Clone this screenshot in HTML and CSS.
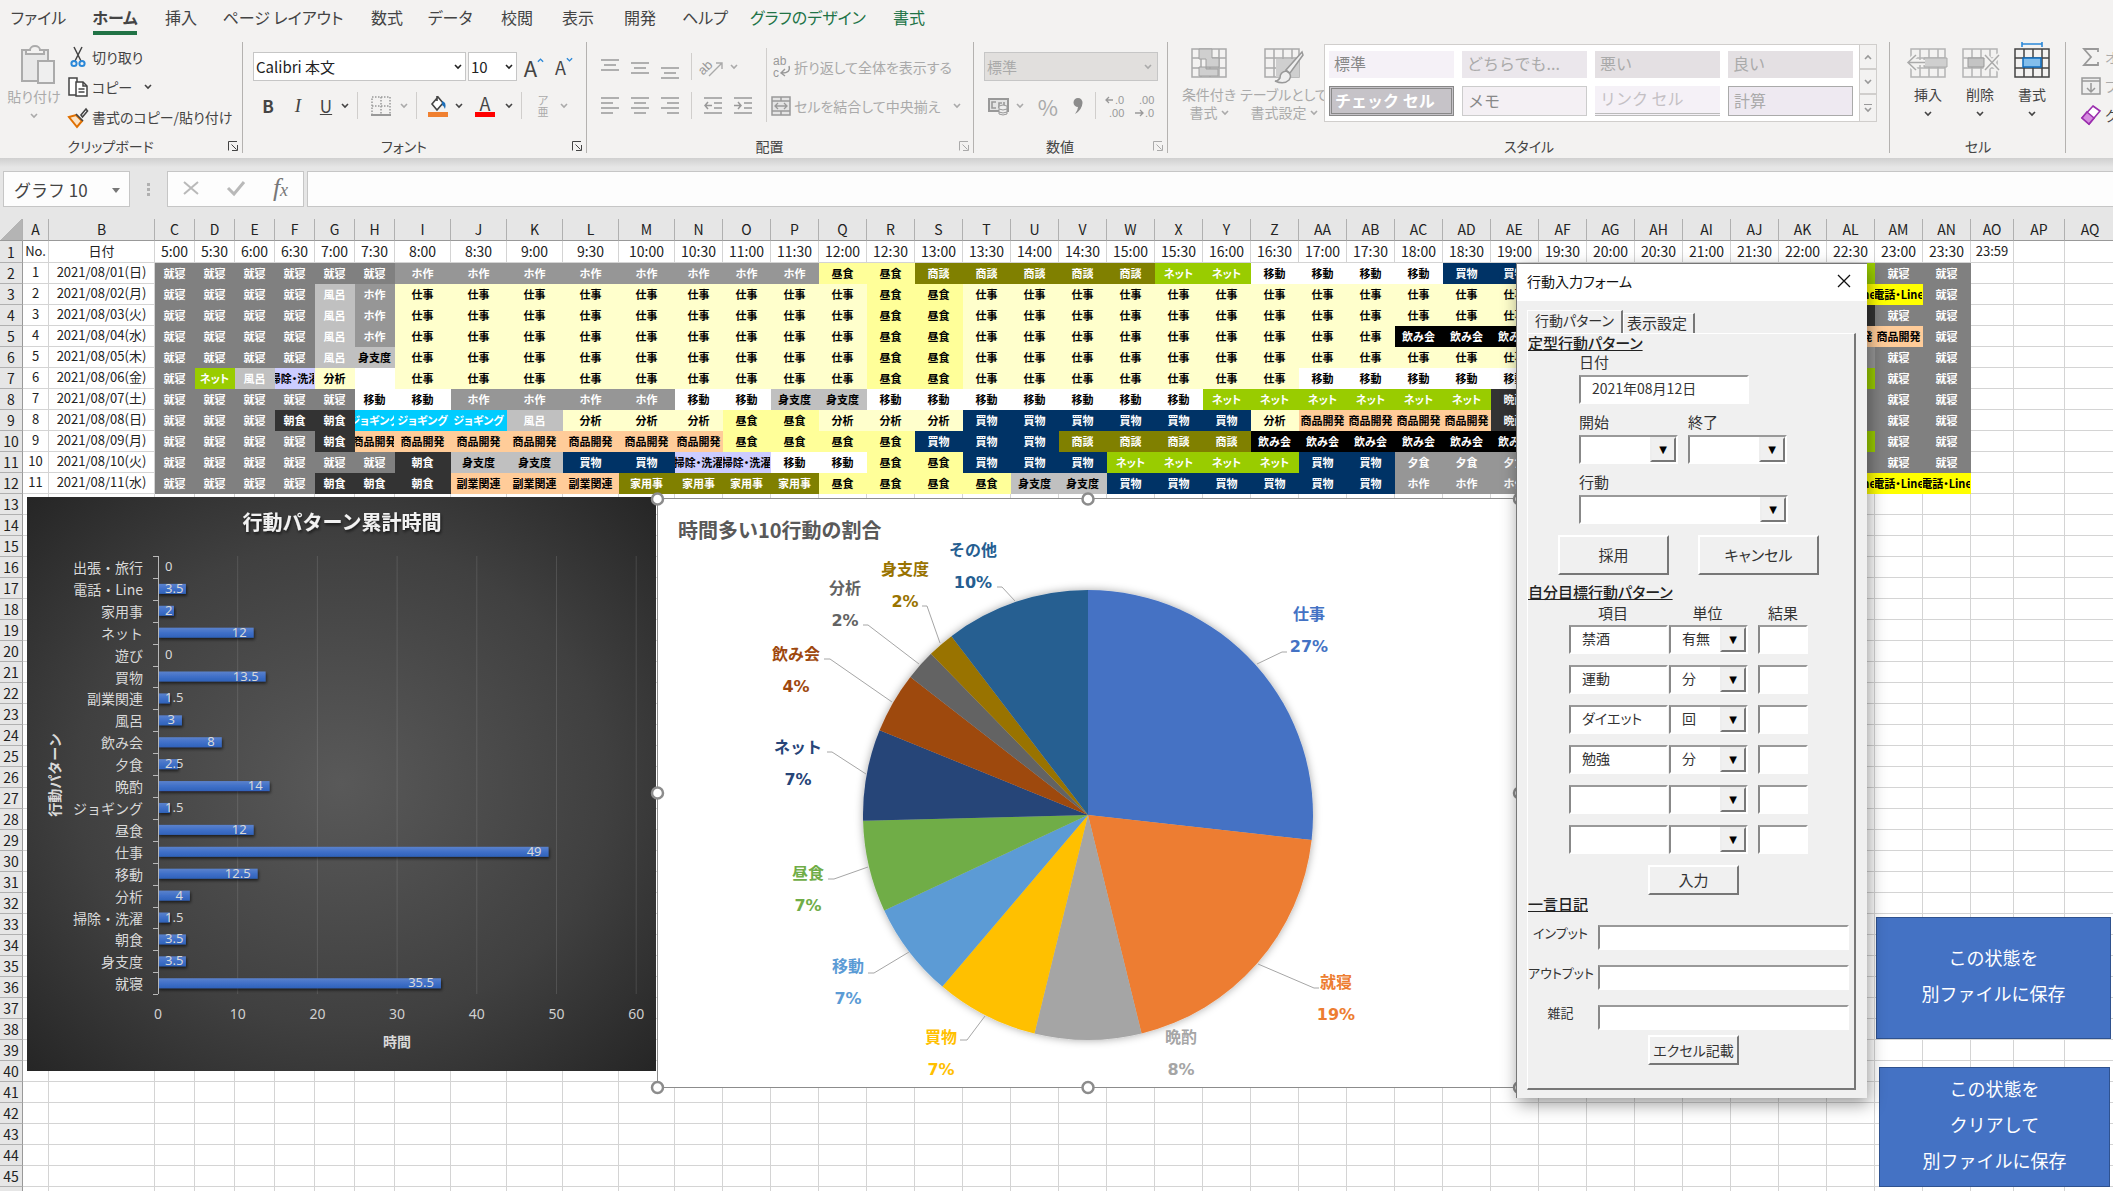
FILE: index.html
```html
<!DOCTYPE html>
<html lang="ja">
<head>
<meta charset="utf-8">
<title>行動記録</title>
<link rel="stylesheet" href="styles.css">
</head>
<body>
<svg class="defs" aria-hidden="true">
  <symbol id="chev" viewBox="0 0 8 6"><path d="M1 1l3 3 3-3" fill="none" stroke="currentColor" stroke-width="1.6"/></symbol>
  <symbol id="launch" viewBox="0 0 10 10"><path d="M.5 9.500V.5H9M9.500 4v5.500H4M3.500 3.500l5 5" fill="none" stroke="currentColor"/></symbol>
  <symbol id="grid" viewBox="0 0 36 30"><path d="M1 1h34v28H1zM1 10h34M1 20h34M10 1v28M19 1v28M28 1v28" fill="#f3f2f1" stroke="currentColor" stroke-width="1.5"/></symbol>
</svg>

<nav class="tabs">
  <button>ファイル</button><button class="on">ホーム</button><button>挿入</button><button>ページ レイアウト</button><button>数式</button><button>データ</button><button>校閲</button><button>表示</button><button>開発</button><button>ヘルプ</button><button class="ctx">グラフのデザイン</button><button class="ctx">書式</button>
</nav>

<div class="ribbon">
  <section class="group clipboard">
    <div class="tools">
      <button class="big off"><svg width="36" height="40" viewBox="0 0 36 40"><g fill="#e8e8e8" stroke="#ababab" stroke-width="2"><path d="M2 5h26v31H2z"/><path d="M6 9V5h4a5 4 0 0 1 10 0h4v4z" fill="#f3f2f1"/><path d="M18 16h16v22H18z" fill="#efefef"/></g></svg>貼り付け<svg class="chev"><use href="#chev"/></svg></button>
      <div class="list">
        <button><svg width="20" height="22" viewBox="0 0 20 22"><path d="M6 1l7 14M14 1L7 15" stroke="#444" stroke-width="1.500"/><g fill="none" stroke="#2b88d8" stroke-width="2"><circle cx="6" cy="17.500" r="2.600"/><circle cx="14" cy="17.500" r="2.600"/></g></svg>切り取り</button>
        <button><svg width="20" height="22" viewBox="0 0 20 22"><g fill="#fff" stroke="#444" stroke-width="1.500"><path d="M1 2h8v17H1z"/><path d="M8 6h7l4 4v10H8z"/><path d="M15 6v4h4M10.500 13h6M10.500 16h6" fill="none"/></g></svg>コピー<svg class="chev"><use href="#chev"/></svg></button>
        <button><svg width="20" height="22" viewBox="0 0 20 22"><path d="M1 11l7-2 6 6-5 6z" fill="#fbe3c5" stroke="#e07000" stroke-width="2"/><path d="M8 8l7 7M13 9l5-6 1.500 2-5 6z" fill="#fff" stroke="#444" stroke-width="1.600"/></svg>書式のコピー/貼り付け</button>
      </div>
    </div>
    <footer>クリップボード<svg class="launch"><use href="#launch"/></svg></footer>
  </section>

  <section class="group font">
    <div class="tools col">
      <div class="row">
        <label class="combo w213"><input value="Calibri 本文" aria-label="フォント"><svg class="chev"><use href="#chev"/></svg></label>
        <label class="combo w49"><input value="10" aria-label="サイズ"><svg class="chev"><use href="#chev"/></svg></label>
        <button class="w32 big-a">A<svg class="chev blue up"><use href="#chev"/></svg></button>
        <button class="w32 small-a">A<svg class="chev blue"><use href="#chev"/></svg></button>
      </div>
      <div class="row">
        <button class="w30"><b>B</b></button><button class="w30"><i>I</i></button><button class="w26"><u>U</u></button><button class="w12"><svg class="chev"><use href="#chev"/></svg></button>
        <span class="sep"></span>
        <button class="w34 off"><svg width="20" height="20" viewBox="0 0 20 20"><path d="M1 1h18v18H1zM10 1v18M1 10h18" fill="none" stroke="#999" stroke-dasharray="1.500 1.500" stroke-width="1.500"/><path d="M0 19h20" stroke="#999" stroke-width="2"/></svg></button><button class="w12 off"><svg class="chev"><use href="#chev"/></svg></button>
        <span class="sep"></span>
        <button class="w30"><svg width="20" height="22" viewBox="0 0 20 22"><path d="M4 9l6-7 5 6-6 7zM9 1v5" fill="#fff" stroke="#444" stroke-width="1.600"/><path d="M14 6q5 1 3 8-1-3-3-4z" fill="#1e6fb8"/><path d="M0 17h20v5H0z" fill="#f08030"/></svg></button><button class="w12"><svg class="chev"><use href="#chev"/></svg></button>
        <button class="w34 color-a">A</button><button class="w12"><svg class="chev"><use href="#chev"/></svg></button>
        <span class="sep"></span>
        <button class="w30 off ruby"><small>ア</small><small>亜</small></button><button class="w12 off"><svg class="chev"><use href="#chev"/></svg></button>
      </div>
    </div>
    <footer>フォント<svg class="launch"><use href="#launch"/></svg></footer>
  </section>

  <section class="group align off">
    <div class="tools">
      <div class="col">
        <div class="row">
          <button class="w30"><svg width="18" height="18"><path d="M0 2h18M3 7h12M0 12h18" stroke="#999" stroke-width="1.500"/></svg></button><button class="w30"><svg width="18" height="18"><path d="M0 5h18M3 10h12M0 15h18" stroke="#999" stroke-width="1.500"/></svg></button><button class="w30"><svg width="18" height="24"><path d="M0 13h18M3 18h12M0 23h18" stroke="#999" stroke-width="1.500"/></svg></button>
          <span class="sep"></span>
          <button class="w30"><svg width="22" height="22" viewBox="0 0 22 22"><text x="-3" y="14" transform="rotate(-45 6 12)" font-size="13" fill="#999">ab</text><path d="M7 20L20 7M14 7h6v6" fill="none" stroke="#aaa" stroke-width="1.400"/></svg></button><button class="w12"><svg class="chev"><use href="#chev"/></svg></button>
        </div>
        <div class="row">
          <button class="w30"><svg width="18" height="20"><path d="M0 2h18M0 7h12M0 12h18M0 17h12" stroke="#999" stroke-width="1.500"/></svg></button><button class="w30"><svg width="18" height="20"><path d="M0 2h18M3 7h12M0 12h18M3 17h12" stroke="#999" stroke-width="1.500"/></svg></button><button class="w30"><svg width="18" height="20"><path d="M0 2h18M6 7h12M0 12h18M6 17h12" stroke="#999" stroke-width="1.500"/></svg></button>
          <span class="sep"></span>
          <button class="w30"><svg width="18" height="20"><path d="M0 2h18M10 7h8M10 12h8M0 17h18M8 9.500H1M4 6L1 9.500 4 13" fill="none" stroke="#999" stroke-width="1.500"/></svg></button><button class="w30"><svg width="18" height="20"><path d="M0 2h18M10 7h8M10 12h8M0 17h18M0 9.500h7M4 6l3 3.500L4 13" fill="none" stroke="#999" stroke-width="1.500"/></svg></button>
        </div>
      </div>
      <span class="sep tall"></span>
      <div class="col">
        <div class="row"><button class="txt"><svg width="20" height="22" viewBox="0 0 20 22"><text x="2" y="9" font-size="12" fill="#999">ab</text><text x="2" y="21" font-size="12" fill="#999">c</text><path d="M18 10q2 7-7 7M14 13l-4 4 4 3" fill="none" stroke="#999" stroke-width="1.400"/></svg>折り返して全体を表示する</button></div>
        <div class="row"><button class="txt"><svg width="20" height="20" viewBox="0 0 20 20"><path d="M1 1h18v18H1zM1 5h18M1 15h18M10 1v4M10 15v4" fill="#e4e4e4" stroke="#999" stroke-width="1.500"/><path d="M4 10h12M7 7l-3 3 3 3M13 7l3 3-3 3" fill="none" stroke="#999" stroke-width="1.300"/></svg>セルを結合して中央揃え<svg class="chev"><use href="#chev"/></svg></button></div>
      </div>
    </div>
    <footer>配置<svg class="launch"><use href="#launch"/></svg></footer>
  </section>

  <section class="group number off">
    <div class="tools col">
      <div class="row"><label class="combo w174"><input value="標準" disabled aria-label="表示形式"><svg class="chev"><use href="#chev"/></svg></label></div>
      <div class="row">
        <button class="w30"><svg width="22" height="20" viewBox="0 0 22 20"><path d="M1 3h19v12H1z" fill="#e4e4e4" stroke="#999" stroke-width="2"/><path d="M8 6H4v6h4M11 12V7h3M16 6v3" fill="none" stroke="#999" stroke-width="1.600"/><path d="M11 10v8q4 2 8 0v-8q-4-2-8 0M11 13q4 2 8 0M11 16q4 2 8 0" fill="#eee" stroke="#999"/></svg></button><button class="w12"><svg class="chev"><use href="#chev"/></svg></button>
        <button class="w34 pct">%</button><button class="w26"><svg width="10" height="18" viewBox="0 0 10 18"><path d="M5 1a4.500 4.500 0 0 1 4.500 5Q9 13 2 17q3-4 3-7a4.500 4.500 0 0 1 0-9z" fill="#8c8c8c"/></svg></button>
        <span class="sep"></span>
        <button class="w30"><svg width="20" height="22" viewBox="0 0 20 22"><path d="M8 5H1M4 2L1 5l3 3" fill="none" stroke="#999" stroke-width="1.300"/><text x="10" y="9" font-size="11" fill="#999">.0</text><text x="4" y="22" font-size="11" fill="#999">.00</text></svg></button><button class="w30"><svg width="20" height="22" viewBox="0 0 20 22"><text x="4" y="9" font-size="11" fill="#999">.00</text><path d="M0 18h8M5 15l3 3-3 3" fill="none" stroke="#999" stroke-width="1.300"/><text x="10" y="22" font-size="11" fill="#999">.0</text></svg></button>
      </div>
    </div>
    <footer>数値<svg class="launch"><use href="#launch"/></svg></footer>
  </section>

  <section class="group styles">
    <div class="tools">
      <button class="big off"><svg width="36" height="40" viewBox="0 0 36 40"><use href="#grid" y="5" width="36" height="30"/><path d="M8 6h13v9h7v9H8v9h19v-7H15V16H8z" fill="#cfcfcf" stroke="#a0a0a0"/></svg>条件付き<span>書式 <svg class="chev"><use href="#chev"/></svg></span></button>
      <button class="big off wide"><svg width="40" height="40" viewBox="0 0 40 40"><use href="#grid" y="5" width="36" height="30"/><path d="M12 16h23v18H12z" fill="#cfcfcf"/><path d="M38 9L22 27l4 3L39 12zM22 28q-6 1-6 7-2 3-5 3 9 4 14-1 3-4 0-7z" fill="#efefef" stroke="#999" stroke-width="1.500"/></svg>テーブルとして<span>書式設定 <svg class="chev"><use href="#chev"/></svg></span></button>
      <div class="gallery">
        <div class="cells">
          <button class="normal">標準</button><button class="neutral">どちらでも...</button><button class="bad">悪い</button><button class="good">良い</button>
          <button class="check">チェック セル</button><button class="memo">メモ</button><button class="link">リンク セル</button><button class="calc">計算</button>
        </div>
        <div class="spin"><button><svg class="chev up"><use href="#chev"/></svg></button><button><svg class="chev"><use href="#chev"/></svg></button><button class="more"><svg class="chev"><use href="#chev"/></svg></button></div>
      </div>
    </div>
    <footer>スタイル</footer>
  </section>

  <section class="group cellops">
    <div class="tools">
      <button class="big"><svg class="dim" width="42" height="40" viewBox="0 0 42 40"><use href="#grid" x="3" y="5" width="36" height="30"/><path d="M17 15h23v9H17z" fill="#cfcfcf" stroke="#aaa"/><path d="M18 19.500H1M9 12l-8 7.500 8 7.500" fill="none" stroke="#f3f2f1" stroke-width="5"/><path d="M18 19.500H1M9 12l-8 7.500 8 7.500" fill="none" stroke="#aaa" stroke-width="1.500"/></svg>挿入<svg class="chev"><use href="#chev"/></svg></button>
      <button class="big"><svg class="dim" width="42" height="40" viewBox="0 0 42 40"><use href="#grid" x="3" y="5" width="36" height="30"/><path d="M9 15h16v9H9z" fill="#c4c4c4" stroke="#999"/><path d="M26 12l14 15M40 12L26 27" stroke="#f3f2f1" stroke-width="5"/><path d="M26 12l14 15M40 12L26 27" stroke="#aaa" stroke-width="1.500"/></svg>削除<svg class="chev"><use href="#chev"/></svg></button>
      <button class="big"><svg width="42" height="40" viewBox="0 0 42 40"><use href="#grid" x="3" y="5" width="36" height="30"/><path d="M12 15h18v9H12z" fill="#83beec" stroke="#0f6cbd" stroke-width="1.500"/><path d="M11 1h20M11-2v6M31-2v6" stroke="#2b88d8" stroke-width="1.600"/></svg>書式<svg class="chev"><use href="#chev"/></svg></button>
    </div>
    <footer>セル</footer>
  </section>

  <section class="group edit">
    <div class="list">
      <button class="off"><svg width="20" height="22" viewBox="0 0 20 22"><path d="M17 6V3H3l7 8-7 8h14v-3" fill="none" stroke="#999" stroke-width="1.800"/></svg>オート SUM</button>
      <button class="off"><svg width="20" height="22" viewBox="0 0 20 22"><path d="M1 3h18v16H1zM1 6h18" fill="#eee" stroke="#999" stroke-width="1.500"/><path d="M10 8v9M6 13l4 4 4-4" fill="none" stroke="#999" stroke-width="1.500"/></svg>フィル</button>
      <button><svg width="20" height="22" viewBox="0 0 20 22"><path d="M12 2l7 5-11 13-7-6z" fill="#fff" stroke="#9b2fae" stroke-width="1.600"/><path d="M6 8l7 6-5 6-7-6z" fill="#d68be0" stroke="#9b2fae" stroke-width="1.600"/></svg>クリア</button>
    </div>
  </section>
</div>

<div class="formula">
  <label class="namebox"><input value="グラフ 10" aria-label="名前ボックス"><svg width="8" height="5"><path d="M0 0h8l-4 5z" fill="#777"/></svg></label>
  <span class="dots"><i></i><i></i><i></i></span>
  <div class="fxbox">
    <button aria-label="キャンセル"><svg width="16" height="14"><path d="M1 1l14 12M15 1L1 13" stroke="#b9b9b9" stroke-width="2"/></svg></button>
    <button aria-label="入力"><svg width="18" height="14"><path d="M1 7l6 6L17 1" fill="none" stroke="#b9b9b9" stroke-width="3"/></svg></button>
    <button class="fx">f<small>x</small></button>
  </div>
  <input class="fline" aria-label="数式バー">
</div>

<main class="sheet">
  <table class="cellgrid"><colgroup id="cols"></colgroup><thead id="head"></thead><tbody id="body"></tbody></table>
  <svg class="bar-chart" viewBox="27 497 629 574" id="bars" role="img" aria-label="行動パターン累計時間"></svg>
  <svg class="pie-chart" viewBox="650 490 880 606" id="pie" role="img" aria-label="時間多い10行動の割合"></svg>
  <button class="macro save">この状態を<br>別ファイルに保存</button>
  <button class="macro clear">この状態を<br>クリアして<br>別ファイルに保存</button>

  <form class="dialog" onsubmit="return false">
    <header><span>行動入力フォーム</span><button type="button" aria-label="閉じる"><svg width="14" height="14"><path d="M1 1l12 12M13 1L1 13" stroke="#111" stroke-width="1.300"/></svg></button></header>
    <div class="dtabs"><button type="button" class="on">行動パターン</button><button type="button">表示設定</button></div>
    <div class="panel">
      <h3>定型行動パターン</h3>
      <div class="fields">
        <div class="field"><label for="date">日付</label><input id="date" class="sunk w170" value="2021年08月12日"></div>
        <div class="pair">
          <div class="field"><label for="from">開始</label><span class="drop w99"><select id="from"><option></option></select></span></div>
          <div class="field"><label for="to">終了</label><span class="drop w99"><select id="to"><option></option></select></span></div>
        </div>
        <div class="field"><label for="act">行動</label><span class="drop w209"><select id="act"><option></option></select></span></div>
      </div>
      <div class="actions"><button type="button" class="w111">採用</button><button type="button" class="w121">キャンセル</button></div>
      <h3>自分目標行動パターン</h3>
      <div class="goals" id="goals"><span class="h">項目</span><span class="h">単位</span><span class="h last">結果</span></div>
      <button type="button" class="mid enter">入力</button>
      <h3>一言日記</h3>
      <div class="diary">
        <label for="in">インプット</label><input id="in" class="sunk">
        <label for="out">アウトプット</label><input id="out" class="sunk">
        <label for="misc">雑記</label><input id="misc" class="sunk">
      </div>
      <button type="button" class="mid">エクセル記載</button>
    </div>
  </form>
</main>
<script src="app.js"></script>
</body>
</html>
```
FILE: styles.css
```css
* { box-sizing: border-box; }
html, body { height: 100%; }
body {
  margin: 0;
  display: flex;
  flex-direction: column;
  overflow: hidden;
  background: #fff;
  color: #444;
  font: 14px/20px "Noto Sans CJK JP", sans-serif;
}
button, input, select { font: inherit; color: inherit; font-feature-settings: inherit; }
button { border: 0; background: none; padding: 0; white-space: nowrap; }
button svg { flex: none; overflow: visible; }
button svg text { font-family: "Liberation Sans", sans-serif; }
input { min-width: 0; border: 0; background: none; padding: 0; }
.defs { display: none; }
.chev { width: 8px; height: 6px; flex: none; }
.chev.up { transform: rotate(180deg); }
.chev.blue { color: #2b88d8; }

.tabs, .ribbon, .dialog { font-feature-settings: "palt"; }
.tabs {
  flex: none;
  height: 42px;
  background: #f3f2f1;
  display: grid;
  grid-template-columns: 77px 76px 56px 148px 60px 66px 68px 54px 70px 60px 146px 56px;
  font-size: 16px;
}
.tabs button { height: 35px; display: flex; justify-content: center; align-items: center; padding-bottom: 2px; }
.tabs .on { font-weight: 700; width: 44px; justify-self: center; border-bottom: 4px solid #217346; padding: 2px 0 0; }
.tabs .ctx { color: #217346; }

.ribbon {
  flex: none;
  height: 116px;
  background: #f3f2f1;
  display: grid;
  grid-template-columns: 243px 344px 387px 194px 722px 176px 1fr;
  overflow: hidden;
}
.group { position: relative; display: flex; flex-direction: column; min-width: 0; }
.group::after { content: ""; position: absolute; right: 0; top: 0; height: 111px; border-right: 1px solid #b4b2b0; }
.group.edit::after { display: none; }
.group footer { height: 20px; margin-top: auto; margin-bottom: 2px; padding-right: 22px; text-align: center; color: #444; font-size: 14px; position: relative; }
.group.styles footer, .group.cellops footer { padding-right: 0; }
.launch { position: absolute; right: 5px; top: 5px; width: 10px; height: 10px; }
.off, .off .launch, .off .chev { color: #aaa; }
.tools { display: flex; height: 94px; }
.col { display: flex; flex-direction: column; gap: 10px; }
.tools.col, .align .tools > .col { padding-top: 10px; }
.row { display: flex; align-items: center; height: 29px; }
.row button { height: 26px; display: flex; align-items: center; justify-content: center; flex: none; }
.row b, .row i, .row u { font-size: 17px; }
.row i { font-family: "Liberation Serif", serif; font-size: 19px; }
.sep { width: 1px; height: 27px; background: #d0cecc; margin: 0 6px; }
.sep.tall { height: 74px; margin: 6px 4px 0 8px; }
.w12 { width: 12px; } .w26 { width: 26px; } .w30 { width: 30px; } .w32 { width: 30px; } .w34 { width: 34px; }
.combo { display: flex; align-items: center; height: 29px; padding: 0 3px 0 2px; background: #fff; border: 1px solid #c6c6c6; color: #222; font-size: 15px; margin-right: 2px; }
.combo input { flex: 1; width: 0; }
.w213 { width: 213px; } .w49 { width: 49px; } .w174 { width: 174px; }
.number .combo { background: #e1dfdd; color: #aaa; padding-right: 5px; }
.big-a { font-size: 22px; } .small-a { font-size: 18px; }
.big-a .chev, .small-a .chev { align-self: flex-start; margin-top: 3px; width: 7px; }
.row .color-a { font-size: 18px; line-height: 20px; align-self: center; height: 22px; border-bottom: 5px solid red; width: 20px; margin: 0 8px 0 10px; }
.row .ruby { flex-direction: column; line-height: 11px; }
.ruby small { font-size: 11px; }
.row .pct { font-size: 22px; margin-left: 5px; }
.number .sep { margin: 0 4px; }

.big { width: 68px; display: flex; flex-direction: column; align-items: center; padding-top: 1px; line-height: 18px; }
.big > svg:first-child { margin-bottom: 2px; }
.big .chev { margin-top: 8px; }
.big span .chev { margin: 0 0 2px; }
.dim { color: #b4b4b4; }
.list { display: flex; flex-direction: column; }
.list button { height: 30px; display: flex; align-items: center; gap: 4px; }
.list .chev { margin-left: 8px; }
.clipboard .big { padding-top: 3px; }
.clipboard .big > svg:first-child { margin-left: 7px; }
.font .tools, .number .tools { padding-left: 10px; }
.align .tools { padding-left: 8px; }
.row .txt { gap: 3px; }
.txt .chev { margin-left: 10px; }
.styles .tools { padding-left: 6px; }
.styles .big { width: 70px; }
.styles .big.wide { width: 80px; }
.gallery { display: flex; height: 78px; width: 553px; margin-top: 2px; background: #fff; border: 1px solid #d0cecc; font-size: 16px; font-feature-settings: normal; }
.cells { flex: 1; display: grid; grid-template-columns: repeat(4, 1fr); gap: 8px; padding: 6px 6px 5px 4px; }
.cells button { text-align: left; padding: 0 0 2px 5px; color: #aaa; line-height: 22px; }
.cells .normal { background: #f5f1f7; color: #888; }
.cells .neutral { background: #ebe7ec; }
.cells .bad, .cells .good { background: #e4e0e3; }
.cells .check { background: #c6c3c8; color: #fff; font-weight: 700; border: 3px double #888; padding-left: 3px; line-height: 20px; }
.cells .memo { background: #f4f0f4; border: 1px solid #ccc; color: #888; }
.cells .link { background: #f5f1f7; border-bottom: 3px double #bbb; color: #c4c0c4; }
.cells .calc { background: #eee9f1; border: 1px solid #aaa; }
.spin { width: 17px; display: grid; border-left: 1px solid #d0cecc; }
.spin button { background: #f3f2f1; display: flex; align-items: center; justify-content: center; color: #999; }
.spin button + button { border-top: 2px solid #d0cecc; }
.more .chev { border-top: 1px solid #999; height: 9px; padding-top: 2px; }
.cellops .tools { padding-left: 12px; }
.cellops .big { width: 52px; }
.edit { padding-left: 15px; }
.edit .list button { height: 29px; }

.formula { flex: none; height: 61px; padding: 13px 0 12px 3px; display: flex; background: linear-gradient(#cfcfcf, #e6e6e6 9px); }
.namebox, .fxbox, .fline { background: #fdfdfd; border: 1px solid #c6c6c6; height: 36px; }
.namebox { width: 127px; display: flex; align-items: center; padding: 2px 9px 0 10px; font-size: 17px; }
.namebox input { flex: 1; width: 0; }
.dots { width: 37px; display: flex; flex-direction: column; align-items: center; justify-content: center; gap: 2px; }
.dots i { width: 3px; height: 3px; background: #b0b0b0; }
.fxbox { width: 137px; display: grid; grid-template-columns: repeat(3, 1fr); margin-right: 3px; }
.fx { font: italic 26px/30px "Liberation Serif", serif; color: #777; }
.fx small { font-size: 18px; }
.fline { flex: 1; border-right: 0; }

.sheet { position: relative; flex: 1; min-height: 0; overflow: hidden; }
.cellgrid { table-layout: fixed; border-collapse: separate; border-spacing: 0; width: 2116px; }
.cellgrid th, .cellgrid td { height: 21px; padding: 0 0 2px; text-align: center; white-space: nowrap; overflow: hidden; line-height: 18px; border-right: 1px solid #d4d4d4; border-bottom: 1px solid #d4d4d4; color: #222; }
.cellgrid tr.first > * { height: 22px; }
.cellgrid thead th { height: 22px; }
.cellgrid th { background: #e6e6e6; font-weight: 400; border-color: #b0b0b0; font-size: 14px; }
.cellgrid thead th { border-bottom-color: #999; }
.cellgrid tbody th { border-right-color: #999; padding: 0; }
.cellgrid td { font-size: 13px; }
.cellgrid .time { font-size: 14px; }
.cellgrid td.act { padding: 0; font-size: 11px; font-weight: 700; border-color: transparent; font-feature-settings: "palt"; }
.cellgrid td.act span { display: flex; justify-content: center; }
.corner { background: linear-gradient(135deg, #e6e6e6 50%, #b4b4b4 50%) !important; }

.bar-chart { position: absolute; left: 27px; top: 278px; width: 629px; height: 574px; }
.pie-chart { position: absolute; left: 650px; top: 271px; width: 880px; height: 606px; }
.bar-chart text, .pie-chart text { font-family: "Noto Sans CJK JP", sans-serif; }
.bar-chart text.num { font-family: "Noto Sans", sans-serif; }
.pie-chart text.num { font-family: "DejaVu Sans", sans-serif; }
.macro { position: absolute; background: #4472c4; border: 1px solid #2f528f; color: #fff; font-size: 18px; line-height: 36px; padding-bottom: 6px; }
.save { left: 1876px; top: 698px; width: 235px; height: 122px; }
.clear { left: 1879px; top: 848px; width: 231px; height: 120px; }

.dialog { position: absolute; left: 1516px; top: 44px; width: 351px; background: #f0f0f0; border-left: 1px solid #777; border-top: 1px solid #777; padding-bottom: 8px; box-shadow: 2px 6px 16px rgba(0,0,0,.4); color: #333; font-size: 15px; }
.dialog header { height: 37px; background: #fff; display: flex; align-items: center; justify-content: space-between; padding: 0 16px 3px 10px; font-size: 14px; color: #111; }
.dialog header button { display: flex; }
.dtabs { display: flex; align-items: flex-end; height: 32px; padding-left: 10px; }
.dtabs button { height: 20px; border: 1px solid #fff; border-right: 2px solid #777; border-bottom: 0; padding: 0 6px 2px 3px; line-height: 17px; }
.dtabs .on { height: 23px; width: 96px; padding: 0 0 4px; font-size: 14px; }
.panel { margin: 0 11px 0 10px; border: 1px solid #fff; border-right: 2px solid #777; border-bottom: 2px solid #777; height: 757px; }
.panel h3 { margin: 0; font-size: 15px; font-weight: 500; line-height: 18px; text-decoration: underline; color: #222; }
.fields { padding-left: 51px; display: grid; gap: 8px; }
.field { display: grid; gap: 3px; justify-items: start; }
.pair { display: flex; gap: 10px; }
.sunk, .drop { border: 2px solid #fff; border-top-color: #999; border-left-color: #888; background: #fff; height: 29px; }
.sunk { padding: 0 0 4px 11px; font-size: 14px; }
.w99 { width: 99px; } .w170 { width: 170px; } .w209 { width: 209px; }
.drop { display: flex; position: relative; }
.drop select { flex: 1; min-width: 0; border: 0; background: none; appearance: none; padding: 0 0 4px 11px; font-size: 14px; }
.drop::after { content: "▼"; position: absolute; right: 0; top: 0; bottom: 0; width: 22px; background: #f0f0f0; border: 2px solid #777; border-left-color: #eee; border-top-color: #eee; font: 10px/22px "DejaVu Sans", sans-serif; text-align: center; color: #000; pointer-events: none; }
.actions { display: flex; gap: 29px; padding-left: 30px; margin: 11px 0 8px; }
.actions button, .mid { height: 40px; background: #f0f0f0; border: 2px solid #777; border-top-color: #fff; border-left-color: #fff; }
.w111 { width: 111px; } .w121 { width: 121px; }
.goals { display: grid; grid-template-columns: 100px 89px 50px; row-gap: 11px; padding: 2px 0 0 41px; }
.goals .h { text-align: center; padding-right: 12px; margin-bottom: -9px; }
.goals .last { padding: 0; }
.goals .sunk { width: 99px; } .goals .drop { width: 79px; } .goals .res { width: 50px; padding-left: 4px; }
.mid { display: block; width: 91px; height: 30px; margin-left: 120px; font-size: 14px; }
.enter { margin-top: 11px; font-size: 15px; }
.diary { display: grid; grid-template-columns: 65px 251px; column-gap: 5px; row-gap: 15px; padding: 12px 0 5px; }
.diary label { text-align: center; line-height: 16px; font-size: 13px; white-space: nowrap; }
.diary .sunk { height: 25px; }
```
FILE: app.js
```js
const el = id => document.getElementById(id);

// Sheet
const widths = [23, 26, 106, ...Array(6).fill(40), ...Array(5).fill(56), ...Array(27).fill(48), 43, 51, 51];
el('cols').innerHTML = widths.map(w => `<col style="width:${w}px">`).join('');
const letter = i => (i >= 26 ? 'A' : '') + String.fromCharCode(65 + i % 26);
const count = widths.length - 1;
el('head').innerHTML = '<tr><th class="corner"></th>' + Array.from({ length: count }, (_, i) => `<th>${letter(i)}</th>`).join('') + '</tr>';

const look = {
  就寝: '808080 fff', ホ作: '969696 fff', 仕事: 'ffffcc 000', 風呂: 'c0c0c0 fff', 身支度: 'c0c0c0 000',
  ネット: '99cc00 fff', '掃除・洗濯': 'ccccff 000', 分析: 'ffffcc 000', 移動: 'ffffff 000', 朝食: '333333 fff',
  晩酌: '333333 fff', ジョギング: '00ccff fff', 商品開発: 'ffcc99 000', 副業関連: 'ffcc99 000', 買物: '003366 fff',
  家用事: '808000 fff', 商談: '808000 fff', 昼食: 'ffff99 000', 飲み会: '000000 fff', 夕食: '969696 fff',
  '電話・Line': 'ffff00 000', '': 'ffffff 000'
};
const days = [
  ['日', '就寝6 ホ作8 昼食2 商談5 ネット2 移動4 買物8 ネット1 就寝2'],
  ['月', '就寝4 風呂1 ホ作1 仕事9 昼食2 仕事18 電話・Line2 就寝1'],
  ['火', '就寝4 風呂1 ホ作1 仕事9 昼食2 仕事18 晩酌1 就寝2'],
  ['水', '就寝4 風呂1 ホ作1 仕事9 昼食2 仕事9 飲み会9 商品開発2 就寝1'],
  ['木', '就寝4 風呂1 身支度1 仕事9 昼食2 仕事18 ホ作1 就寝2'],
  ['金', '就寝1 ネット1 風呂1 掃除・洗濯1 分析1 1 仕事9 昼食2 仕事7 移動11 ネット1 就寝2'],
  ['土', '就寝5 移動2 ホ作4 移動2 身支度2 移動7 ネット6 晩酌7 就寝3'],
  ['日', '就寝3 朝食2 ジョギング3 風呂1 分析3 昼食2 分析3 買物6 分析1 商品開発4 晩酌7 就寝3'],
  ['月', '就寝4 朝食1 商品開発7 昼食4 買物3 商談4 飲み会12 ネット1 就寝2'],
  ['火', '就寝6 朝食1 身支度2 買物2 掃除・洗濯2 移動2 昼食2 買物3 ネット4 買物2 夕食9 就寝3'],
  ['水', '就寝4 朝食3 副業関連3 家用事4 昼食4 身支度2 買物6 ホ作9 電話・Line3']
];
const blank = n => '<td></td>'.repeat(n);
let rows = '<tr class="first"><th>1</th><td>No.</td><td>日付</td>';
for (let t = 10; t < 48; t++) rows += `<td class="time">${t >> 1}:${t % 2 ? '30' : '00'}</td>`;
rows += '<td>23:59</td>' + blank(2) + '</tr>';
days.forEach(([wd, runs], i) => {
  rows += `<tr><th>${i + 2}</th><td>${i + 1}</td><td>2021/08/${String(i + 1).padStart(2, '0')}(${wd})</td>`;
  runs.split(' ').forEach(run => {
    const [, name, n] = run.match(/^(.*?)(\d+)$/);
    const [bg, fg] = look[name].split(' ');
    rows += `<td class="act" style="background:#${bg};color:#${fg}"><span>${name}</span></td>`.repeat(+n);
  });
  rows += blank(3) + '</tr>';
});
for (let r = 13; r < 47; r++) rows += `<tr><th>${r}</th>${blank(count)}</tr>`;
el('body').innerHTML = rows;

// Bar chart
const hours = [['出張・旅行', 0], ['電話・Line', 3.5], ['家用事', 2], ['ネット', 12], ['遊び', 0], ['買物', 13.5], ['副業関連', 1.5], ['風呂', 3], ['飲み会', 8], ['夕食', 2.5], ['晩酌', 14], ['ジョギング', 1.5], ['昼食', 12], ['仕事', 49], ['移動', 12.5], ['分析', 4], ['掃除・洗濯', 1.5], ['朝食', 3.5], ['身支度', 3.5], ['就寝', 35.5]];
const x0 = 158, y0 = 556, step = 21.91, unit = 7.97;
let s = `<defs><radialGradient id="bg" cx=".5" cy=".5" r=".7"><stop offset="0" stop-color="#595959"/><stop offset=".6" stop-color="#404040"/><stop offset="1" stop-color="#262626"/></radialGradient>
<linearGradient id="bar" x2="0" y2="1"><stop offset="0" stop-color="#5b82cc"/><stop offset=".5" stop-color="#4070c8"/><stop offset="1" stop-color="#2f62ba"/></linearGradient>
<filter id="sh" x="-10%" y="-30%" width="125%" height="190%"><feDropShadow dx="1" dy="2" stdDeviation="1.5" flood-opacity=".6"/></filter></defs>
<rect x="27" y="497" width="629" height="574" fill="url(#bg)"/>
<text x="342" y="530" font-size="20" font-weight="700" fill="#f2f2f2" text-anchor="middle" filter="url(#sh)">行動パターン累計時間</text>`;
for (let i = 0; i <= 6; i++) {
  const x = x0 + i * 10 * unit;
  if (i) s += `<path d="M${x} ${y0}V994" stroke="#fff" stroke-opacity=".12"/>`;
  s += `<text class="num" x="${x}" y="1019" font-size="14" fill="#d0d0d0" text-anchor="middle">${i * 10}</text>`;
}
hours.forEach(([name, v], i) => {
  const y = y0 + step * (i + .5), w = v * unit;
  if (v) s += `<rect x="${x0}" y="${y - 5}" width="${w}" height="10" fill="url(#bar)" filter="url(#sh)"/>`;
  s += `<text x="143" y="${y + 6}" font-size="14" fill="#d9d9d9" text-anchor="end">${name}</text>`;
  const inside = w >= 30 || v === 3 || v === 4;
  s += `<text class="num" x="${inside ? x0 + w - 7 : 165}" y="${y + 4}" font-size="13" fill="#d9d9d9" text-anchor="${inside ? 'end' : 'start'}">${v}</text>`;
});
let ticks = `M${x0}.5 ${y0}V994`;
for (let i = 0; i <= 20; i++) ticks += `M${x0 - 5} ${Math.round(y0 + step * i) + .5}h5`;
s += `<path d="${ticks}" stroke="#b8b8b8" fill="none"/>
<text x="397" y="1047" font-size="14" font-weight="700" fill="#d9d9d9" text-anchor="middle">時間</text>
<text transform="translate(60 775) rotate(-90)" font-size="14" font-weight="700" fill="#d9d9d9" text-anchor="middle">行動パターン</text>`;
el('bars').innerHTML = s;

// Pie chart: name, hours, colour, share, label centre, leader line
const slices = [
  ['仕事', 49, '4472c4', 27, 1309, 614, 'M1287 652h-5L1257 664'],
  ['就寝', 35.5, 'ed7d31', 19, 1336, 982, 'M1319 988h-5L1258 964'],
  ['晩酌', 14, 'a5a5a5', 8, 1181, 1037, ''],
  ['買物', 13.5, 'ffc000', 7, 941, 1037, 'M960 1040h7L985 1016'],
  ['移動', 12.5, '5b9bd5', 7, 848, 966, 'M868 973h6L909 952'],
  ['昼食', 12, '70ad47', 7, 808, 873, 'M828 879h6L868 867'],
  ['ネット', 12, '264478', 7, 798, 747, 'M827 752h5L866 774'],
  ['飲み会', 8, '9e480e', 4, 796, 654, 'M824 659h6L892 702'],
  ['分析', 4, '636363', 2, 845, 588, 'M863 625h5L919 664'],
  ['身支度', 3.5, '997300', 2, 905, 569, 'M922 606h5L940 643'],
  ['その他', 19, '255e91', 10, 973, 550, 'M997 587h5L1015 601']
];
const cx = 1088, cy = 815, R = 225;
let p = `<defs><filter id="glow" x="-5%" y="-5%" width="110%" height="110%"><feDropShadow dx="0" dy="0" stdDeviation="4" flood-opacity=".35"/></filter></defs>
<rect x="657.5" y="498.5" width="862" height="589" fill="#fff" stroke="#8c8c8c"/>
<text x="678" y="538" font-size="20" font-weight="700" fill="#595959">時間多い10行動の割合</text><g filter="url(#glow)">`;
let a = 0, notes = '';
slices.forEach(([name, v, c, share, x, y, line]) => {
  const b = a + v / 183 * 2 * Math.PI;
  const pt = t => `${(cx + R * Math.sin(t)).toFixed(2)} ${(cy - R * Math.cos(t)).toFixed(2)}`;
  p += `<path d="M${cx} ${cy}L${pt(a)}A${R} ${R} 0 0 1 ${pt(b)}Z" fill="#${c}"/>`;
  a = b;
  notes += `<path d="${line}" fill="none" stroke="#a6a6a6"/><g fill="#${c}" font-weight="700" text-anchor="middle"><text x="${x}" y="${y + 6}" font-size="16">${name}</text><text class="num" x="${x}" y="${y + 38}" font-size="16">${share}%</text></g>`;
});
p += '</g>' + notes;
for (const hx of [657.5, 1088, 1519.5]) for (const hy of [499, 793, 1087.5])
  if (hx !== 1088 || hy !== 793) p += `<circle cx="${hx}" cy="${hy}" r="5.5" fill="#fff" stroke="#8c8c8c" stroke-width="2.5"/>`;
el('pie').innerHTML = p;

// Goal rows
el('goals').insertAdjacentHTML('beforeend', [['禁酒', '有無'], ['運動', '分'], ['ダイエット', '回'], ['勉強', '分'], ['', ''], ['', '']].map(([item, u], i) =>
  `<input class="sunk" value="${item}" aria-label="項目${i + 1}"><span class="drop"><select aria-label="単位${i + 1}"><option>${u}</option></select></span><input class="sunk res" aria-label="結果${i + 1}">`).join(''));
```
